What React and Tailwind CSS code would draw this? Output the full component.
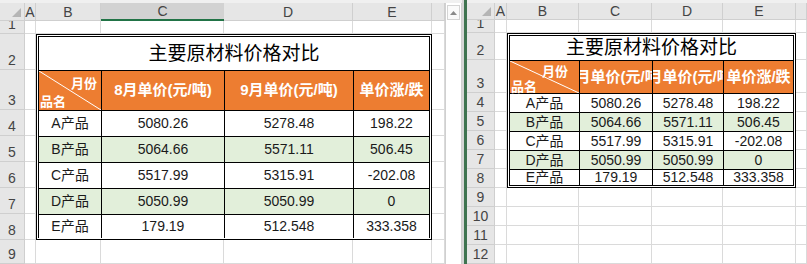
import { Fragment } from 'react'

const rows = [
  ['A产品', '5080.26', '5278.48', '198.22'],
  ['B产品', '5064.66', '5571.11', '506.45'],
  ['C产品', '5517.99', '5315.91', '-202.08'],
  ['D产品', '5050.99', '5050.99', '0'],
  ['E产品', '179.19', '512.548', '333.358'],
]

const heads = ['8月单价(元/吨)', '9月单价(元/吨)', '单价涨/跌']

const letters = ['A', 'B', 'C', 'D', 'E', '']

// two windows share the same sheet, only sizes differ
const big = {
  grid: 'grid-cols-[25px_11px_65px_123px_129px_79px_13px] grid-rows-[18px_13px_36px_40px_26px_26px_26px_26px_26px_24px]',
  table: 'grid-cols-[62px_123px_129px_76px] grid-rows-[33px_40px_26px_26px_26px_26px_24px]',
  rowNums: [1, 2, 3, 4, 5, 6, 7, 8, 9],
  selected: 2,
  corner: 'w-[25px]',
  tag: 'right-[4px] top-[6px]',
  name: 'left-[1px] bottom-[2px]',
}

const small = {
  grid: 'grid-cols-[28px_12px_72px_73px_71px_73px_11px] grid-rows-[17px_13px_27px_33px_19px_19px_19px_19px_19px_19px_19px_19px_19px]',
  table: 'grid-cols-[69px_73px_71px_70px] grid-rows-[24px_33px_19px_19px_19px_19px_16px]',
  rowNums: [1, 2, 3, 4, 5, 6, 7, 8, 9, 10, 11, 12],
  selected: -1,
  corner: 'w-[28px]',
  tag: 'right-[11px] top-[4px]',
  name: 'left-[1px] bottom-[0px]',
}

const Corner = () => (
  <div className="relative bg-[#e6e6e6] border-r border-b border-[#cfcfcf]">
    <svg className="absolute right-[3px] bottom-[3px]" width="9" height="9" viewBox="0 0 9 9">
      <polygon points="9,0 9,9 0,9" fill="#b5b5b5" />
    </svg>
  </div>
)

const PriceTable = ({ cfg }) => (
  <div className="col-start-3 col-end-7 row-start-3 row-end-10 border-[3px] border-double border-black bg-white text-[#1a1a1a]">
    <div className={`grid h-full ${cfg.table}`}>
      <div className="col-span-4 flex items-center justify-center pt-[1px] text-[19px] text-black">主要原材料价格对比</div>

      <div className="relative border-t border-black bg-[#ed7d31] text-[13px] font-bold text-white">
        <svg className="absolute inset-0 h-full w-full" viewBox="0 0 100 100" preserveAspectRatio="none">
          <line x1="0" y1="0" x2="100" y2="100" stroke="#fff" strokeWidth="1" vectorEffect="non-scaling-stroke" />
        </svg>
        <span className={`absolute leading-none ${cfg.tag}`}>月份</span>
        <span className={`absolute leading-none ${cfg.name}`}>品名</span>
      </div>
      {heads.map(h => (
        <div key={h} className="flex items-center justify-center overflow-hidden whitespace-nowrap border-t border-l border-black bg-[#ed7d31] text-[15px] font-bold text-white">
          {h}
        </div>
      ))}

      {rows.map((r, ri) => r.map((v, ci) => (
        <div
          key={ri + '-' + ci}
          className={`flex items-center justify-center whitespace-nowrap border-t border-black text-[14px] ${ci > 0 ? 'border-l' : ''} ${ri % 2 === 1 ? 'bg-[#e2efda]' : 'bg-white'}`}
        >
          {v}
        </div>
      )))}
    </div>
  </div>
)

const Sheet = ({ cfg }) => (
  <div className="flex flex-col">
    <div className="h-[3px] bg-[#f0f0f0]" />
    <div className={`grid ${cfg.grid}`}>
      <Corner />
      {letters.map((l, i) => (
        <div
          key={'h' + i}
          className={`flex items-center justify-center overflow-hidden text-[14px] leading-none text-[#444] ${i === cfg.selected ? 'bg-[#d2d2d2] border-b-2 border-[#217346]' : 'bg-[#e6e6e6] border-r border-b border-[#cfcfcf]'}`}
        >
          {l}
        </div>
      ))}
      {cfg.rowNums.map(n => (
        <Fragment key={n}>
          <div className="flex items-end justify-center bg-[#e6e6e6] border-r border-b border-[#cfcfcf] pb-[2px] text-[14px] leading-none text-[#444]">
            {n}
          </div>
          {letters.map((l, ci) =>
            n >= 2 && n <= 8 && ci >= 1 && ci <= 4 ? null : (
              <div key={n + '-' + ci} className="border-r border-b border-[#dadada] bg-white" />
            )
          )}
        </Fragment>
      ))}
      <PriceTable cfg={cfg} />
    </div>
  </div>
)

export default function App() {
  return (
    <div className="flex h-[264px] w-[807px] overflow-hidden bg-white font-['Liberation_Sans','Noto_Sans_CJK_SC',sans-serif]">
      <Sheet cfg={big} />

      {/* vertical scrollbar of the left window */}
      <div className="flex w-[17px] flex-col bg-[#f0f0f0]">
        <div className="h-[3px]" />
        <div className="flex flex-1 flex-col border-x border-[#d0d0d0] bg-white">
          <div className="mx-[1px] mt-[2px] flex h-[15px] items-center justify-center border border-[#d4d4d4] bg-[#fafafa]">
            <svg width="7" height="4" viewBox="0 0 7 4">
              <polygon points="3.5,0 7,4 0,4" fill="#8a8a8a" />
            </svg>
          </div>
        </div>
      </div>
      <div className="w-[2px] bg-[#d6d6d6]" />
      <div className="w-[3px] bg-[#3f7450]" />

      <Sheet cfg={small} />
    </div>
  )
}
